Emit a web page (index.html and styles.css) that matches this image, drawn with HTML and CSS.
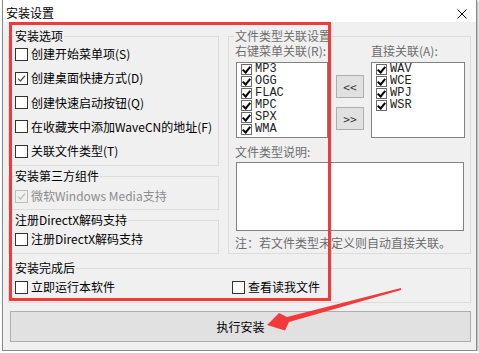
FILE: index.html
```html
<!DOCTYPE html>
<html lang="zh-CN">
<head>
    <meta charset="UTF-8">
    <meta name="viewport" content="width=device-width, initial-scale=1.0">
    <title>安装设置</title>
    <link rel="stylesheet" href="styles.css">
</head>
<body>

    <div class="window">
        <div class="titlebar">
            <span class="title">安装设置</span>
            <svg class="close" width="10" height="10" viewBox="0 0 10 10">
                <path d="M0.5 0.5L9.5 9.5M9.5 0.5L0.5 9.5" stroke="#000" stroke-width="1" fill="none"/>
            </svg>
        </div>

        <div class="content">
            <div class="top">
                <div class="left-col">
                    <fieldset class="group g-options">
                        <legend>安装选项</legend>
                        <div class="rows">
                            <label class="check"><span class="box"></span>创建开始菜单项(S)</label>
                            <label class="check"><span class="box on"><svg width="11" height="11" viewBox="0 0 11 11"><path d="M2 5.6L4.4 8L9 2.8" stroke="#555" stroke-width="1.3" fill="none"/></svg></span>创建桌面快捷方式(D)</label>
                            <label class="check"><span class="box"></span>创建快速启动按钮(Q)</label>
                            <label class="check"><span class="box"></span>在收藏夹中添加WaveCN的地址(F)</label>
                            <label class="check"><span class="box"></span>关联文件类型(T)</label>
                        </div>
                    </fieldset>

                    <fieldset class="group g-small g-third">
                        <legend>安装第三方组件</legend>
                        <label class="check disabled"><span class="box on"><svg width="11" height="11" viewBox="0 0 11 11"><path d="M2 5.6L4.4 8L9 2.8" stroke="#bcbcbc" stroke-width="1.3" fill="none"/></svg></span>微软Windows Media支持</label>
                    </fieldset>

                    <fieldset class="group g-small">
                        <legend>注册DirectX解码支持</legend>
                        <label class="check"><span class="box"></span>注册DirectX解码支持</label>
                    </fieldset>
                </div>

                <fieldset class="group g-assoc">
                    <legend>文件类型关联设置</legend>
                    <div class="lists">
                        <div class="col-a">
                            <div class="label">右键菜单关联(R):</div>
                            <div class="list list-a">
                                <div class="item"><span class="lbox"></span>MP3</div>
                                <div class="item"><span class="lbox"></span>OGG</div>
                                <div class="item"><span class="lbox"></span>FLAC</div>
                                <div class="item"><span class="lbox"></span>MPC</div>
                                <div class="item"><span class="lbox"></span>SPX</div>
                                <div class="item"><span class="lbox"></span>WMA</div>
                            </div>
                        </div>
                        <div class="col-b">
                            <button type="button" class="small-btn">&lt;&lt;</button>
                            <button type="button" class="small-btn">&gt;&gt;</button>
                        </div>
                        <div class="col-c">
                            <div class="label">直接关联(A):</div>
                            <div class="list list-c">
                                <div class="item"><span class="lbox"></span>WAV</div>
                                <div class="item"><span class="lbox"></span>WCE</div>
                                <div class="item"><span class="lbox"></span>WPJ</div>
                                <div class="item"><span class="lbox"></span>WSR</div>
                            </div>
                        </div>
                    </div>
                    <div class="label desc-label">文件类型说明:</div>
                    <div class="desc"></div>
                    <div class="label note">注：若文件类型未定义则自动直接关联。</div>
                </fieldset>
            </div>

            <fieldset class="group g-after">
                <legend>安装完成后</legend>
                <div class="after-row">
                    <label class="check"><span class="box"></span>立即运行本软件</label>
                    <label class="check"><span class="box"></span>查看读我文件</label>
                </div>
            </fieldset>

            <button type="button" class="install">执行安装</button>
        </div>
    </div>

    <!-- annotation drawn over the screenshot -->
    <svg class="mark" width="479" height="353" viewBox="0 0 479 353">
        <rect x="10.5" y="23.5" width="319" height="276" fill="none" stroke="#f23a3a" stroke-width="3"/>
        <polygon points="267,325 279,313 287,317 401,288 401,290 289,322 285,330.5" fill="#f23a3a"/>
    </svg>

</body>
</html>
```

FILE: styles.css
```css
* {
    box-sizing: border-box;
}

body {
    margin: 0;
    background-color: #fff;
    font-family: "Noto Sans CJK SC", sans-serif;
    font-size: 12px;
    color: #000;
}

.window {
    margin-left: 2px;
    width: 475px;
    height: 351px;
    background-color: #f0f0f0;
    border: 1px solid #8a8a8a;
    border-top: none;
    box-shadow: 1px 1px 2px rgba(0, 0, 0, 0.35);
    display: flex;
    flex-direction: column;
}

.titlebar {
    height: 22px;
    background-color: #fff;
    display: flex;
    justify-content: space-between;
    align-items: flex-start;
    padding: 5px 9px 0 3px;
}

.title {
    line-height: 16px;
    font-size: 12px;
}

.close {
    margin-top: 4px;
}

.content {
    padding: 7px 5px 0 5px;
    display: flex;
    flex-direction: column;
}

.top {
    display: flex;
    gap: 9px;
    height: 225px;
}

.left-col {
    width: 211px;
    display: flex;
    flex-direction: column;
    gap: 3px;
}

.group {
    margin: 0;
    min-width: 0;
    border: 1px solid #dcdcdc;
    padding: 0 6px 0 6px;
}

.group legend {
    padding: 0 1px;
    margin-left: -1px;
    line-height: 14px;
    font-size: 12px;
}

.g-options {
    height: 137px;
    padding-top: 4px;
}

.rows {
    display: flex;
    flex-direction: column;
    gap: 10.3px;
}

.g-small {
    height: 41px;
    padding-top: 5px;
}

.g-third {
    padding-top: 6px;
}

.check {
    display: flex;
    align-items: center;
    height: 14px;
    line-height: 14px;
    white-space: nowrap;
}

.box {
    width: 13px;
    height: 13px;
    border: 1px solid #333;
    background-color: #fff;
    margin-right: 3px;
    flex-shrink: 0;
    display: flex;
}

.check.disabled {
    color: #8c8c8c;
}

.check.disabled .box {
    border-color: #bcbcbc;
    background-color: #f0f0f0;
}

/* file type group */
.g-assoc {
    flex: 1;
    padding-top: 1px;
    color: #6d6d6d;
}

.label {
    line-height: 14px;
    white-space: nowrap;
}

.lists {
    display: flex;
    align-items: flex-start;
}

.col-a {
    width: 93px;
}

.col-a .list {
    margin-left: 1px;
    width: 92px;
}

.list {
    margin-top: 4px;
    height: 76px;
    border: 1px solid #828282;
    background-color: #fff;
    padding: 0 0 0 4px;
    color: #222;
}

.item {
    height: 12px;
    display: flex;
    align-items: center;
    font-family: "Liberation Mono", monospace;
    font-size: 12px;
    line-height: 12px;
    overflow: hidden;
}

.lbox {
    width: 11px;
    height: 11px;
    border: 1px solid #6a6a6a;
    background-color: #fff;
    margin-right: 3px;
    flex-shrink: 0;
    position: relative;
}

.lbox::after {
    content: "";
    position: absolute;
    left: 2px;
    top: 0px;
    width: 3px;
    height: 6px;
    border-right: 2px solid #000;
    border-bottom: 2px solid #000;
    transform: rotate(40deg);
}

.col-b {
    margin-left: 8px;
    margin-top: 31px;
    display: flex;
    flex-direction: column;
    gap: 9px;
}

.small-btn {
    width: 28px;
    height: 23px;
    padding: 0;
    background-color: #e1e1e1;
    border: 1px solid #adadad;
    font-family: "Noto Sans CJK SC", sans-serif;
    font-size: 12px;
    color: #333;
}

.col-c {
    margin-left: 7px;
}

.col-c .list {
    width: 94px;
}

.desc-label {
    margin-top: 7px;
}

.desc {
    margin-top: 3px;
    margin-left: 1px;
    width: 228px;
    height: 69px;
    border: 1px solid #828282;
    background-color: #fff;
}

.note {
    margin-top: 5px;
}

/* after install */
.g-after {
    margin-top: 7px;
    height: 42px;
    padding-top: 5px;
}

.after-row {
    display: grid;
    grid-template-columns: 217px 1fr;
}

.install {
    margin-top: 8px;
    margin-left: 2px;
    width: 461px;
    height: 31px;
    background-color: #e1e1e1;
    border: 1px solid #adadad;
    font-family: "Noto Sans CJK SC", sans-serif;
    font-size: 12px;
    color: #000;
}

.mark {
    position: absolute;
    left: 0;
    top: 0;
    pointer-events: none;
}
```
